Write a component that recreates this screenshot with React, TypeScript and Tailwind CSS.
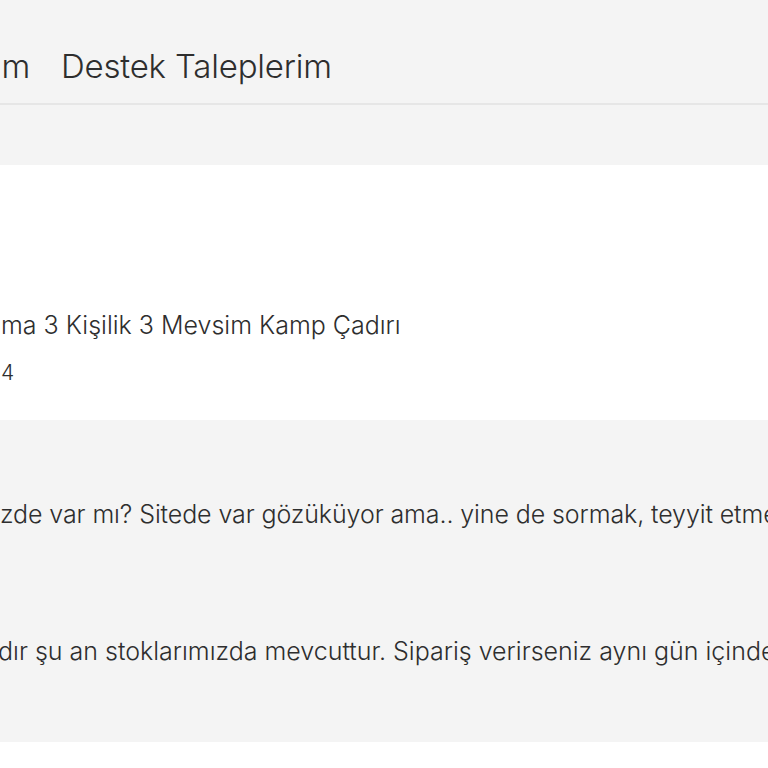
import React from "react";

// Tiny helper: the part of a text that sits left of the viewport edge.
// Zero-width box, right-aligned, so the hidden prefix overflows to the left.
const Cut = ({ children }: { children: React.ReactNode }) => (
    <span className="flex w-0 shrink-0 justify-end whitespace-nowrap">{children}</span>
);

export default function App() {
    return (
        <div className="w-[768px] h-[768px] overflow-hidden bg-[#f4f4f4] text-[#2e2e2e] [font-family:Inter,'Noto_Sans',sans-serif]">
            {/* tabs */}
            <div className="h-[105px] border-b-2 border-[#e6e6e6] flex items-start pt-[46px]">
                <div className="flex text-[33px] leading-[40px] font-light tracking-[-0.2px] whitespace-nowrap">
                    <span className="flex w-[30px] shrink-0 justify-end">Sorularım</span>
                    <span className="ml-[31px]">Destek Taleplerim</span>
                </div>
            </div>

            <div className="h-[60px]" />

            {/* product card */}
            <div className="bg-white h-[255px] pt-[145px] flex flex-col gap-[21px]">
                <div className="flex text-[25px] leading-[30px] font-light whitespace-nowrap">
                    <Cut>Kolay Kurul</Cut>
                    <span className="pl-[1px]">ma 3 Kişilik 3 Mevsim Kamp Çadırı</span>
                </div>
                <div className="flex text-[21px] leading-[24px] font-light whitespace-nowrap">
                    <Cut>14.05.202</Cut>
                    <span className="pl-[1px]">4</span>
                </div>
            </div>

            {/* messages */}
            <div className="h-[322px] flex flex-col pt-[79px] gap-[107px]">
                <div className="flex text-[25px] leading-[30px] font-light tracking-[-0.1px] whitespace-nowrap">
                    <Cut>Bu ürün elini</Cut>
                    <span>zde var mı? Sitede var gözüküyor ama.. yine de sormak, teyyit etmek istedim.</span>
                </div>
                <div className="flex text-[25px] leading-[30px] font-light whitespace-nowrap">
                    <Cut>Merhaba, ürünümüz mevcut</Cut>
                    <span className="-ml-[2px]">dır şu an stoklarımızda mevcuttur. Sipariş verirseniz aynı gün içinde kargoya verilir.</span>
                </div>
            </div>

            <div className="bg-white h-[30px]" />
        </div>
    );
}
